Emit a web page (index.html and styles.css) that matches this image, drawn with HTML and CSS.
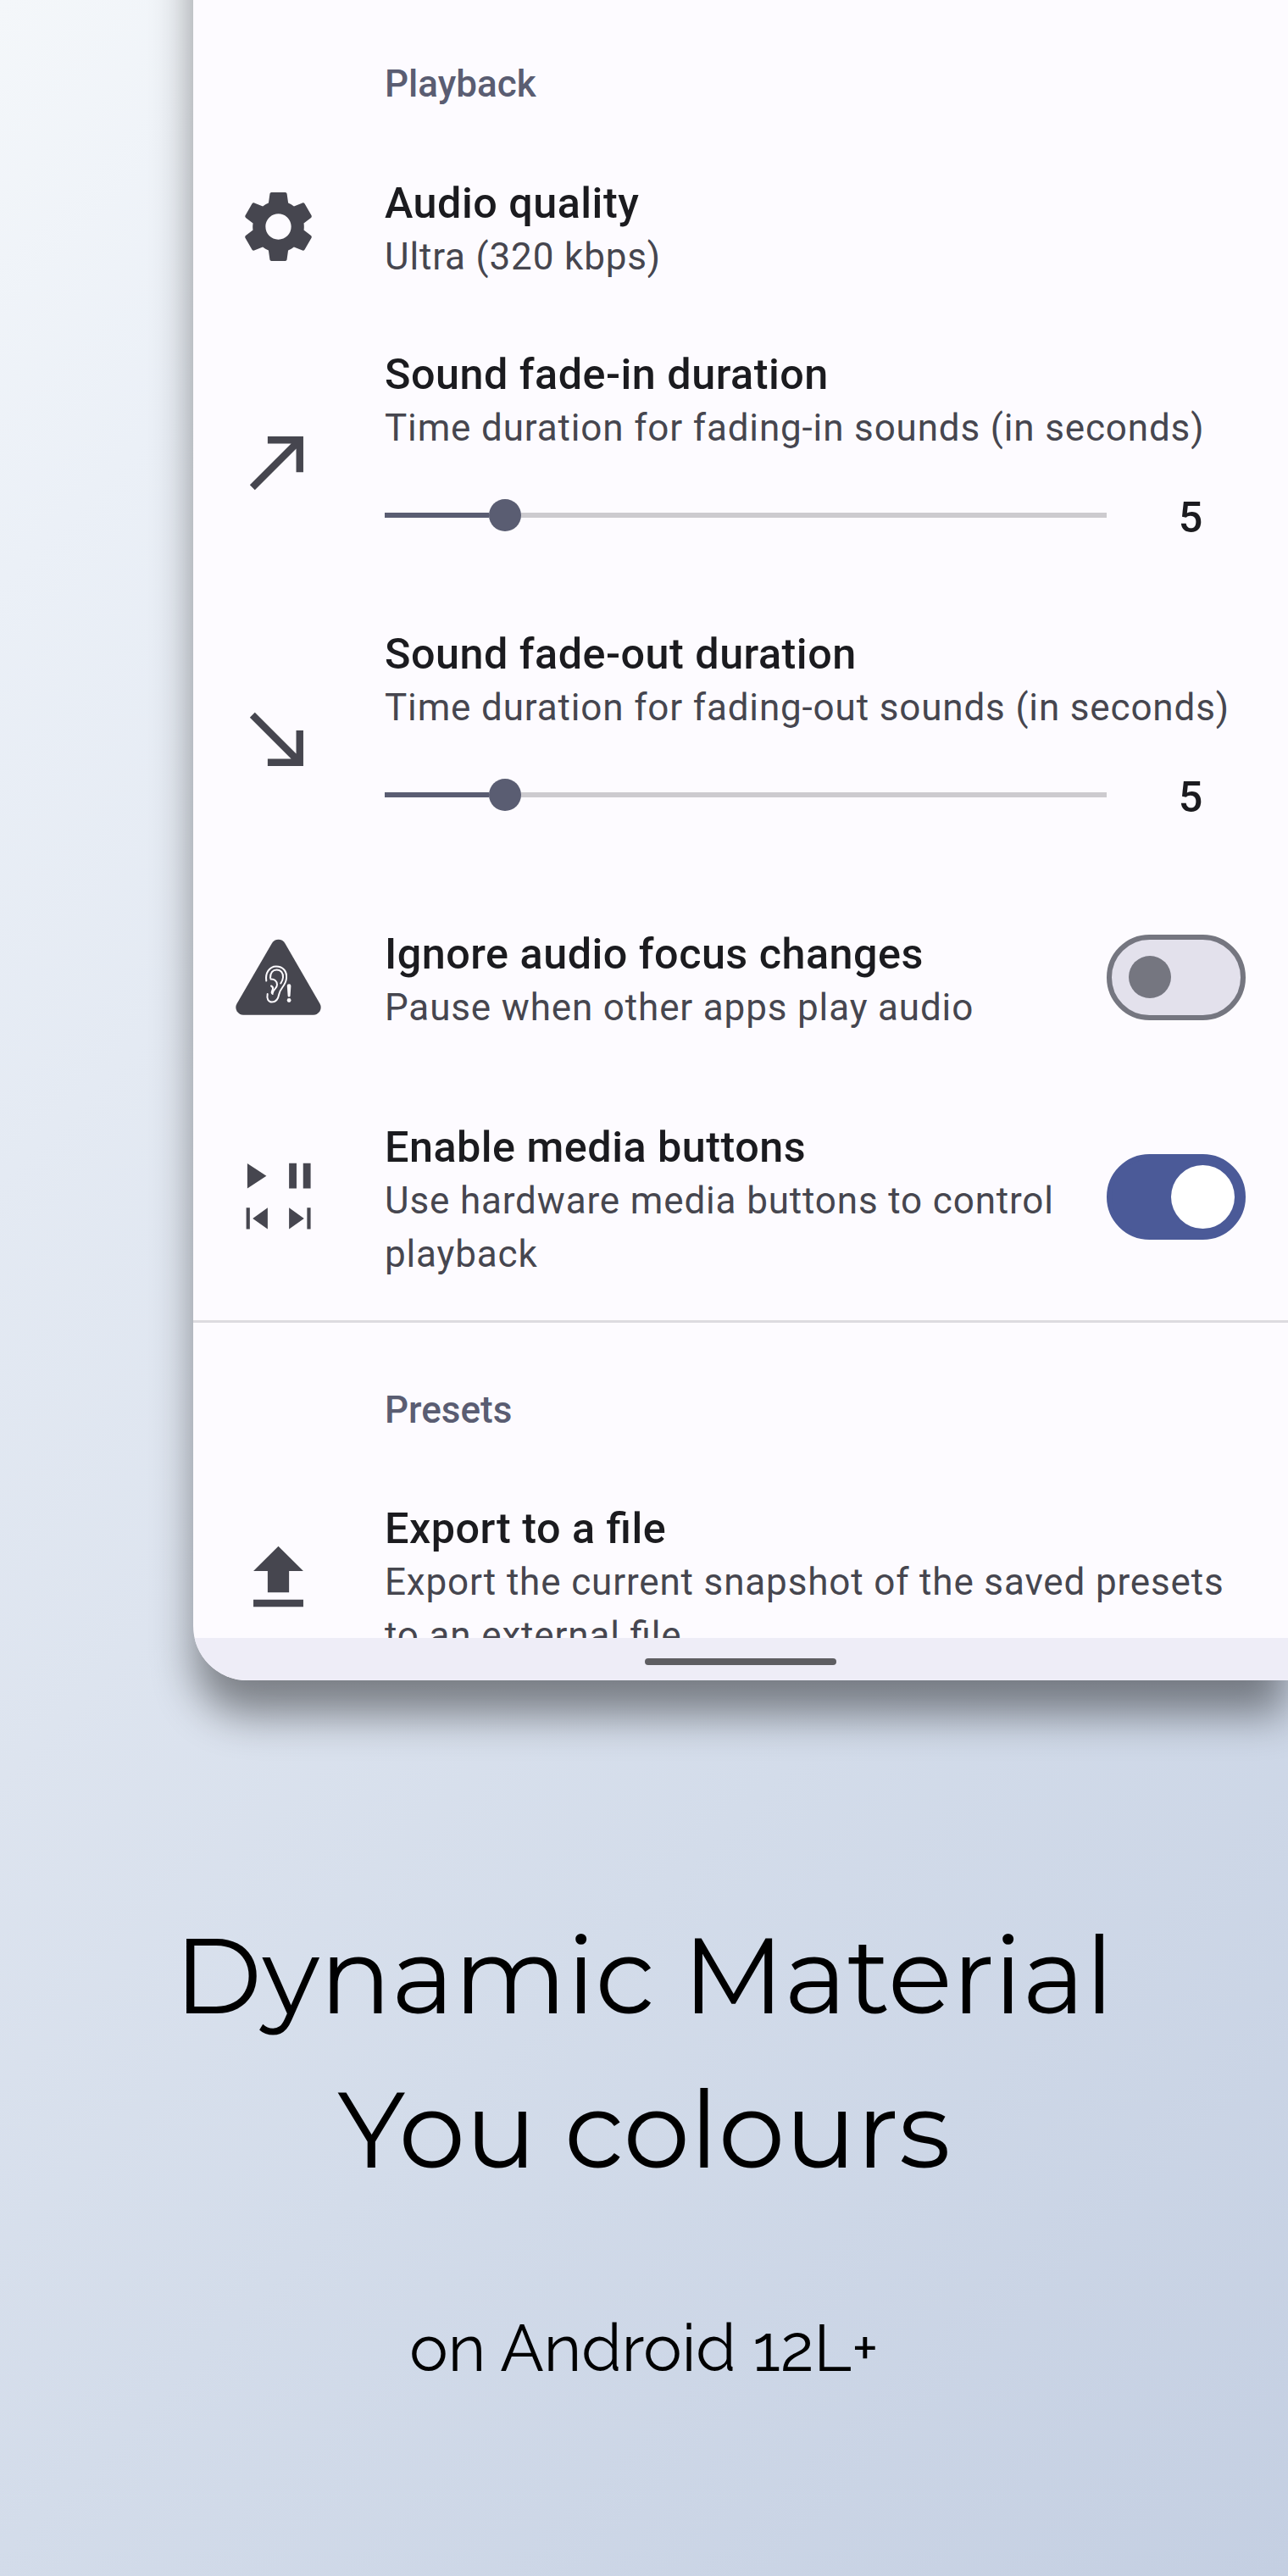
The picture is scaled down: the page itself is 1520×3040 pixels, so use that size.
FILE: index.html
```html
<!DOCTYPE html>
<html lang="en">
<head>
<meta charset="utf-8">
<title>Dynamic Material You colours</title>
<link rel="stylesheet" href="styles.css">
</head>
<body>
<main class="poster">
  <section class="device">
    <div class="settings">
      <h2 class="section-title">Playback</h2>

      <div class="row row-quality">
        <svg class="icon" viewBox="0 0 24 24"><path d="M19.14,12.94c0.04-0.3,0.06-0.61,0.06-0.94c0-0.32-0.02-0.64-0.07-0.94l2.03-1.58c0.18-0.14,0.23-0.41,0.12-0.61l-1.92-3.32c-0.12-0.22-0.37-0.29-0.59-0.22l-2.39,0.96c-0.5-0.38-1.03-0.7-1.62-0.94L14.4,2.81c-0.04-0.24-0.24-0.41-0.48-0.41h-3.84c-0.24,0-0.43,0.17-0.47,0.41L9.25,5.35C8.66,5.59,8.12,5.92,7.63,6.29L5.24,5.33c-0.22-0.08-0.47,0-0.59,0.22L2.74,8.87C2.62,9.08,2.66,9.34,2.86,9.48l2.03,1.58C4.84,11.36,4.8,11.69,4.8,12s0.02,0.64,0.07,0.94l-2.03,1.58c-0.18,0.14-0.23,0.41-0.12,0.61l1.92,3.32c0.12,0.22,0.37,0.29,0.59,0.22l2.39-0.96c0.5,0.38,1.03,0.7,1.62,0.94l0.36,2.54c0.05,0.24,0.24,0.41,0.48,0.41h3.84c0.24,0,0.44-0.17,0.47-0.41l0.36-2.54c0.59-0.24,1.13-0.56,1.62-0.94l2.39,0.96c0.22,0.08,0.47,0,0.59-0.22l1.92-3.32c0.12-0.22,0.07-0.47-0.12-0.61L19.14,12.94z M12,15.6c-1.98,0-3.6-1.62-3.6-3.6s1.62-3.6,3.6-3.6s3.6,1.62,3.6,3.6S13.98,15.6,12,15.6z"/></svg>
        <div class="copy">
          <h3 class="title">Audio quality</h3>
          <p class="summary">Ultra (320 kbps)</p>
        </div>
      </div>

      <div class="row row-slider">
        <svg class="icon" viewBox="0 0 24 24"><path d="M9 5v2h6.59L4 18.59 5.41 20 17 8.41V15h2V5z"/></svg>
        <div class="copy">
          <h3 class="title">Sound fade-in duration</h3>
          <p class="summary">Time duration for fading-in sounds (in seconds)</p>
          <div class="control">
            <div class="slider"><span class="fill"></span><span class="thumb"></span></div>
            <span class="value">5</span>
          </div>
        </div>
      </div>

      <div class="row row-slider">
        <svg class="icon" viewBox="0 0 24 24"><path d="M19 9h-2v6.59L5.41 4 4 5.41 15.59 17H9v2h10V9z"/></svg>
        <div class="copy">
          <h3 class="title">Sound fade-out duration</h3>
          <p class="summary">Time duration for fading-out sounds (in seconds)</p>
          <div class="control">
            <div class="slider"><span class="fill"></span><span class="thumb"></span></div>
            <span class="value">5</span>
          </div>
        </div>
      </div>

      <div class="row row-focus">
        <svg class="icon" viewBox="0 0 101 101">
          <path d="M43 10a8.800 8.800 0 0 1 15.200 0L99.500 81.500a8.900 8.900 0 0 1-7.700 13.300H9.200A8.900 8.900 0 0 1 1.500 81.500z"/>
          <g class="ear">
            <path d="M36.300 54.500c-1.500-9 3.500-17 11.500-17 8.500 0 13 6 12.200 14-.8 9-7.200 11-8.600 18.500-1.300 7-4.400 9.600-8.400 9.600-4.300 0-6.500-3.700-5.300-9.600"/>
            <path d="M41 51c0-6 3-9.500 7.500-9.500 5 0 8 4 7.500 9-.2 3-1.400 5-2.700 7"/>
            <path d="M41.500 52.500c4-.5 7.500 2.500 7.500 6.500 0 4.500-4.500 5.500-5 9.500"/>
            <path d="M42 60.500c2 1 2.500 3 1.500 5-1 2-1.500 3.500.2 4.500"/>
          </g>
          <path class="mark" d="M60.800 60.500a2.300 2.300 0 0 1 4.600 0l-.8 11.500a1.500 1.500 0 0 1-3 0z"/>
          <circle class="mark" cx="63.100" cy="77.500" r="2.400"/>
        </svg>
        <div class="copy">
          <h3 class="title">Ignore audio focus changes</h3>
          <p class="summary">Pause when other apps play audio</p>
        </div>
        <span class="switch"><span class="knob"></span></span>
      </div>

      <div class="row row-media">
        <svg class="icon" viewBox="0 0 24 24"><path d="M3.300 2.600v7l5.350-3.500zM15 2.550h2.100v7.050H15zM18.950 2.550h2.100v7.050h-2.100zM3 15.050h1v6H3zM9 15.050v6l-4.200-3zM15 15.050v6l4.200-3zM20.050 15.050h1v6h-1z"/></svg>
        <div class="copy">
          <h3 class="title">Enable media buttons</h3>
          <p class="summary">Use hardware media buttons to control playback</p>
        </div>
        <span class="switch switch-on"><span class="knob"></span></span>
      </div>

      <hr class="divider">
      <h2 class="section-title">Presets</h2>

      <div class="row row-export">
        <svg class="icon" viewBox="0 0 24 24"><path d="M9 16h6v-6h4l-7-7-7 7h4zM5 18h14v2H5z"/></svg>
        <div class="copy">
          <h3 class="title">Export to a file</h3>
          <p class="summary">Export the current snapshot of the saved presets to an external file</p>
        </div>
      </div>
    </div>
    <div class="navbar"><span class="handle"></span></div>
  </section>

  <h1 class="headline">Dynamic Material<br>You colours</h1>
  <p class="tagline">on Android 12L+</p>
</main>
</body>
</html>
```

FILE: styles.css
```css
* {
  box-sizing: border-box;
}

body,
h1,
h2,
h3,
p {
  margin: 0;
}

.poster {
  width: 1520px;
  height: 3040px;
  overflow: hidden;
  background: linear-gradient(135deg, #f4f7fa 0%, #ebf0f7 15%, #dde4ef 46%, #d3dcea 66%, #c4cfe2 100%);
  color: #000;
}

/* The device runs off the top of the poster, so its side shadow starts above it. */
.device {
  display: flex;
  flex-direction: column;
  width: 1292px;
  height: 2103px;
  margin: -120px 0 0 228px;
  padding-top: 120px;
  overflow: hidden;
  border-radius: 0 0 0 64px;
  background: #fdfbff;
  box-shadow: 0 42px 50px -2px rgba(0, 0, 0, 0.44);
  font-family: Roboto, sans-serif;
}

.settings {
  height: 1933px;
  overflow: hidden;
}

.section-title {
  height: 165px;
  padding: 68px 0 0 226px;
  color: #5a5d72;
  font-size: 44px;
  font-weight: 500;
  line-height: 63px;
}

.row {
  display: flex;
  align-items: center;
  padding: 0 50px;
}

.row-quality {
  height: 204px;
  margin-bottom: 10px;
}

.row-slider {
  height: 330px;
}

.row-focus {
  height: 228px;
}

.row-media {
  height: 290px;
}

.row-export {
  height: 265px;
}

.icon {
  flex: none;
  width: 101px;
  height: 101px;
  margin-right: 75px;
  fill: #46464f;
}

.ear {
  fill: none;
  stroke: #fdfbff;
  stroke-width: 2;
  stroke-linecap: round;
}

.mark {
  fill: #fdfbff;
}

.copy {
  flex: 1;
  padding-top: 9px;
  font-feature-settings: "liga";
}

.title {
  margin-bottom: 1px;
  color: #1b1b1f;
  font-size: 50.3px;
  font-weight: 500;
  line-height: 63px;
  letter-spacing: 0.5px;
}

.summary {
  color: #46464f;
  font-size: 44px;
  line-height: 63px;
  letter-spacing: 0.85px;
}

.control {
  display: flex;
  align-items: center;
  gap: 34px;
  height: 63px;
  margin: 42px 0 45px;
}

.slider {
  display: flex;
  align-items: center;
  width: 852px;
  height: 6px;
  margin-bottom: 6px;
  background: #cdcbcf;
}

.fill {
  width: 123px;
  height: 6px;
  background: #5a5d72;
}

.thumb {
  width: 38px;
  height: 38px;
  border-radius: 50%;
  background: #5a5d72;
}

.value {
  flex: 1;
  color: #1b1b1f;
  font-size: 50.3px;
  font-weight: 500;
  line-height: 63px;
  text-align: center;
}

.switch {
  display: flex;
  flex: none;
  align-items: center;
  width: 164px;
  height: 101px;
  margin-left: 30px;
  padding-left: 20px;
  border: 6px solid #757680;
  border-radius: 51px;
  background: #e3e1ec;
}

.knob {
  width: 50px;
  height: 50px;
  border-radius: 50%;
  background: #757680;
}

.switch-on {
  padding-left: 70px;
  border-color: #4b5a98;
  background: #4b5a98;
}

.switch-on .knob {
  width: 75px;
  height: 75px;
  background: #fff;
}

.divider {
  height: 3px;
  margin: 1px 0 4px;
  border: 0;
  background: #dddbe0;
}

.navbar {
  display: flex;
  align-items: center;
  justify-content: center;
  height: 50px;
  padding-top: 6px;
  background: #eeedf7;
}

.handle {
  width: 226px;
  height: 8px;
  border-radius: 4px;
  background: #5e5e62;
}

.headline {
  margin-top: 257px;
  font-family: Montserrat, Inter, sans-serif;
  font-size: 125.3px;
  font-weight: 400;
  line-height: 182px;
  text-align: center;
}

.tagline {
  margin-top: 117px;
  font-family: Raleway, Lato, sans-serif;
  font-size: 76.3px;
  font-weight: 400;
  line-height: 100px;
  text-align: center;
}
```
